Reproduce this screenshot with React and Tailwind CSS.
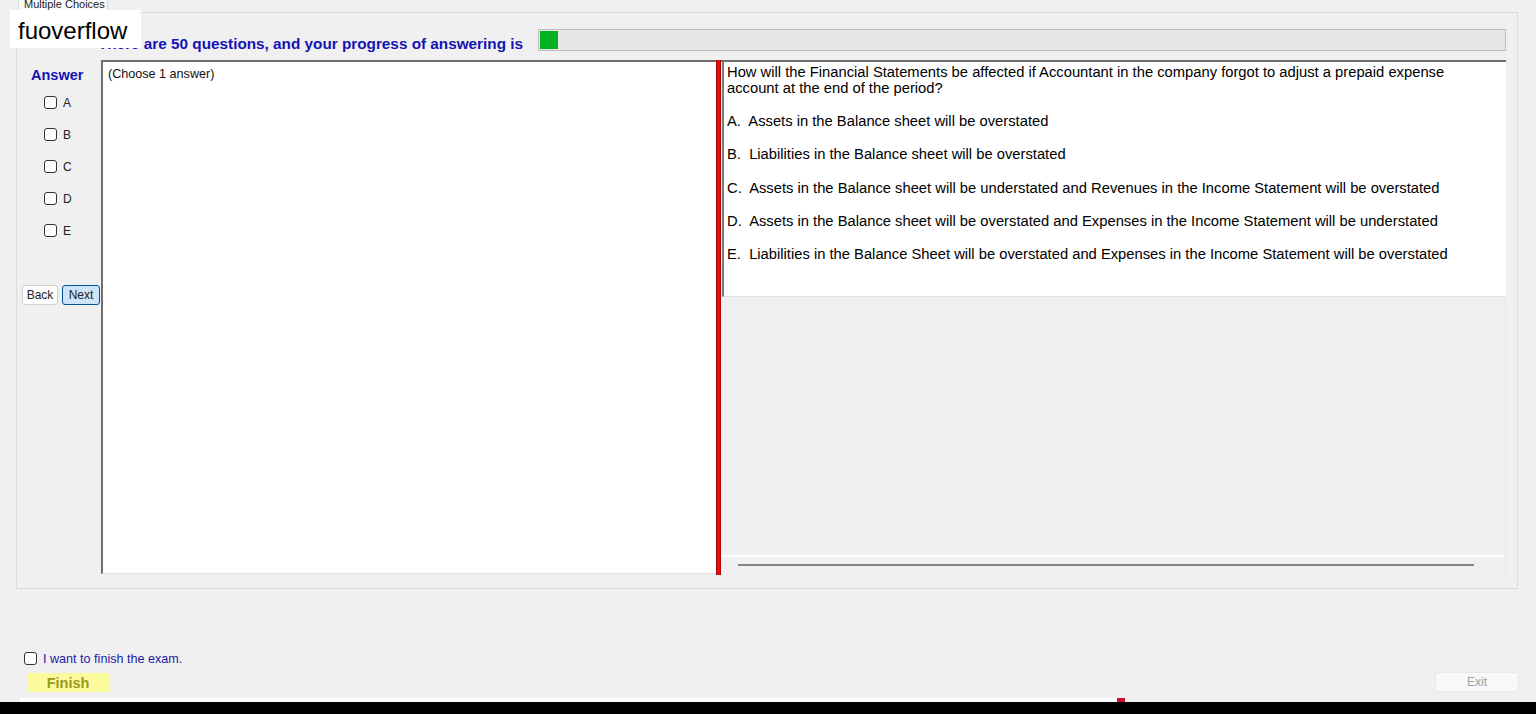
const options = [
  "A.  Assets in the Balance sheet will be overstated",
  "B.  Liabilities in the Balance sheet will be overstated",
  "C.  Assets in the Balance sheet will be understated and Revenues in the Income Statement will be overstated",
  "D.  Assets in the Balance sheet will be overstated and Expenses in the Income Statement will be understated",
  "E.  Liabilities in the Balance Sheet will be overstated and Expenses in the Income Statement will be overstated",
];

const Box = () => (
  <div className="w-[13px] h-[13px] border border-[#333333] rounded-[3px] bg-white shrink-0" />
);

const App = () => {
  return (
    <div className="relative w-[1536px] h-[714px] overflow-hidden bg-[#f0f0f0] flex flex-col font-['Liberation_Sans',Arial,sans-serif] text-black">
      {/* Watermark */}
      <div className="absolute left-[10px] top-[10px] w-[131px] h-[38px] bg-white flex items-center pl-[8px] pt-[4px] text-[24px] leading-none z-10">
        fuoverflow
      </div>

      {/* Tab header */}
      <div className="h-[12px] flex pl-[18px]">
        <div className="w-[90px] h-[12px] bg-[#fafafa] border-x border-[#dadada] overflow-hidden text-[11px] leading-[12px] text-[#222] pl-[5px]">
          <span className="relative -top-[2px]">Multiple Choices</span>
        </div>
      </div>

      {/* Tab page */}
      <div className="ml-[16px] w-[1502px] h-[577px] border border-[#dcdcdc] bg-[#f0f0f0] flex flex-col">
        <div className="h-[16px]" />
        {/* Header row */}
        <div className="flex h-[22px]">
          <div className="w-[521px] flex items-end justify-end pr-[15px]">
            <p className="text-[15.3px] font-bold text-[#1414b4] leading-[16px] -mb-[1px] whitespace-nowrap">
              There are 50 questions, and your progress of answering is
            </p>
          </div>
          <div className="w-[968px] h-[22px] border border-[#bcbcbc] bg-[#e6e6e6] p-[1px]">
            <div className="w-[18px] h-full bg-[#06b025]" />
          </div>
        </div>

        {/* Main row */}
        <div className="flex mt-[9px] h-[515px]">
          {/* Answer column */}
          <div className="w-[84px] flex flex-col">
            <p className="text-[14.5px] font-bold text-[#1414b4] pl-[14px] mt-[7px] leading-[16px]">Answer</p>
            <div className="flex flex-col gap-[19px] mt-[13px] pl-[27px]">
              {["A", "B", "C", "D", "E"].map((l) => (
                <div key={l} className="flex items-center gap-[6px] h-[13px]">
                  <Box />
                  <span className="text-[12px] text-[#222]">{l}</span>
                </div>
              ))}
            </div>
            <div className="flex gap-[4px] pl-[5px] mt-[48px]">
              <button className="w-[36px] h-[20px] bg-white border border-[#d0d0d0] rounded-[3px] text-[12px] text-[#222]">Back</button>
              <button className="w-[38px] h-[20px] bg-[#cce4f7] border border-[#005499] rounded-[3px] text-[12px] text-[#222]">Next</button>
            </div>
          </div>

          {/* Left text box */}
          <div className="w-[615px] h-[514px] bg-white border-t-2 border-l-2 border-[#6e6e6e] border-b border-b-[#e0e0e0] pl-[5px] pt-[3px]">
            <p className="text-[12.6px] text-[#111]">(Choose 1 answer)</p>
          </div>

          {/* Splitter */}
          <div className="w-[5px] h-[515px] bg-[#e41010] border-x border-[#b00000]" />

          {/* Right panel */}
          <div className="w-[785px] flex flex-col border-t-2 border-[#6e6e6e]">
            <div className="h-[235px] bg-white border-l-2 border-[#7a7a7a] ml-[1px] pl-[3px] pt-[2px] border-b border-b-[#e0e0e0]">
              <p className="text-[14.75px] leading-[16px] w-[740px]">
                How will the Financial Statements be affected if Accountant in the company forgot to adjust a prepaid expense account at the end of the period?
              </p>
              <div className="flex flex-col gap-[16.25px] mt-[17px]">
                {options.map((o) => (
                  <p key={o} className="text-[14.75px] leading-[17px] whitespace-pre">{o}</p>
                ))}
              </div>
            </div>
            <div className="flex-1 flex flex-col justify-end border-r border-[#e6e6e6]">
              <div className="h-[18px] border-t-2 border-white flex items-center pl-[17px] mb-[2px]">
                <div className="w-[736px] h-[2px] bg-[#858585]" />
              </div>
            </div>
          </div>
        </div>
      </div>

      {/* Bottom area */}
      <div className="flex-1 flex flex-col">
        <div className="h-[62px]" />
        <div className="flex items-center gap-[6px] pl-[24px] h-[14px]">
          <Box />
          <span className="text-[12.6px] text-[#1a1aa8] relative top-[1px]">I want to finish the exam.</span>
        </div>
        <div className="flex justify-between items-start mt-[7px] pr-[17px]">
          <div className="ml-[27px] mt-[1px] w-[82px] h-[19px] bg-[#fbfb9e] flex items-center justify-center">
            <span className="text-[14.5px] font-bold text-[#9a9a18] relative top-[1px]">Finish</span>
          </div>
          <div className="w-[84px] h-[20px] bg-[#f8f8f8] border border-[#e8e8e8] rounded-[3px] flex items-center justify-center">
            <span className="text-[12px] text-[#a0a0a0]">Exit</span>
          </div>
        </div>
        <div className="flex-1" />
        <div className="flex h-[4px]">
          <div className="ml-[20px] w-[1097px] bg-white" />
          <div className="w-[8px] bg-[#d01030]" />
        </div>
        <div className="h-[12px] bg-black" />
      </div>
    </div>
  );
};

export default App;
